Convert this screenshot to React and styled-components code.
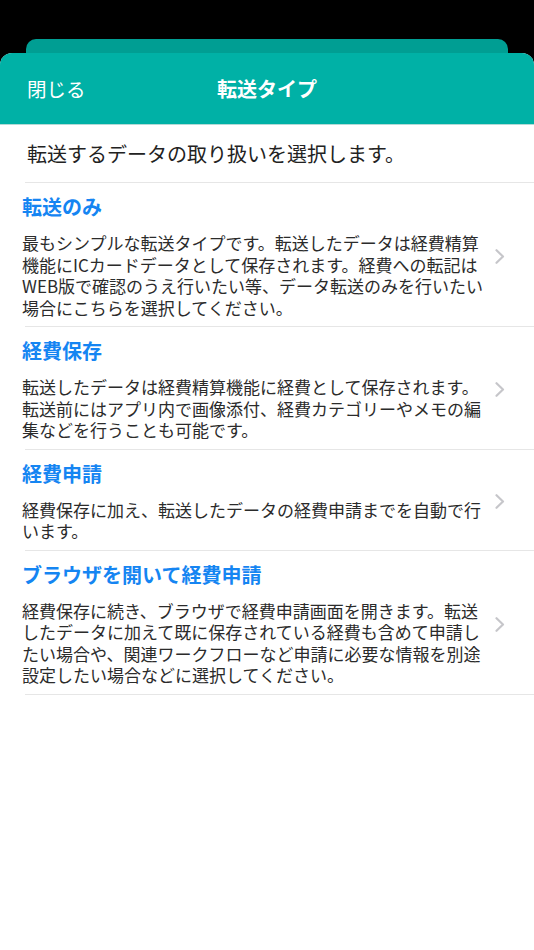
import React from "react";
import styled, { createGlobalStyle } from "styled-components";

const GlobalStyle = createGlobalStyle`
  html, body {
    margin: 0;
    padding: 0;
    background: #000;
  }
  body {
    font-family: "Noto Sans CJK JP", "Noto Sans", sans-serif;
    -webkit-font-smoothing: antialiased;
  }
`;

const Screen = styled.div`
  min-height: 950px;
  background: #000;
  padding-top: 39px;
  display: flex;
  flex-direction: column;
  box-sizing: border-box;
`;

const BackCard = styled.div`
  margin: 0 26px;
  height: 14px;
  background: #009e93;
  border-radius: 10px 10px 0 0;
`;

const Sheet = styled.div`
  flex: 1;
  background: #fff;
  border-radius: 12px 12px 0 0;
  overflow: hidden;
  display: flex;
  flex-direction: column;
`;

const Header = styled.header`
  height: 71px;
  background: #00b1a6;
  border-bottom: 1px solid #b3dad6;
  display: grid;
  grid-template-columns: 1fr auto 1fr;
  align-items: center;
  color: #fff;
`;

const CloseButton = styled.button`
  justify-self: start;
  background: none;
  border: none;
  padding: 0 0 0 27px;
  color: #fff;
  font-family: inherit;
  font-size: 19.5px;
  font-weight: 400;
  cursor: pointer;
`;

const Title = styled.h1`
  margin: 0;
  font-size: 20px;
  font-weight: 700;
  color: #fff;
`;

const Lead = styled.p`
  margin: 0;
  height: 57px;
  display: flex;
  align-items: center;
  padding-left: 27px;
  font-size: 20px;
  color: #222;
`;

const Divider = styled.div`
  height: 1px;
  margin-left: 25px;
  background: #e6e6e6;
`;

const Item = styled.div`
  display: flex;
  align-items: center;
  padding: 12px 0 8px 22px;
  cursor: pointer;
`;

const ItemText = styled.div`
  width: 470px;
  display: flex;
  flex-direction: column;
  gap: 13px;
`;

const ItemTitle = styled.div`
  font-size: 20px;
  line-height: 24px;
  font-weight: 700;
  color: #1585f2;
`;

const ItemDesc = styled.div`
  font-size: 17px;
  line-height: 21.5px;
  color: #2b2b2b;
`;

const Chevron = styled.svg`
  margin-left: 3px;
  flex: none;
`;

const items = [
  {
    title: "転送のみ",
    desc:
      "最もシンプルな転送タイプです。転送したデータは経費精算機能にICカードデータとして保存されます。経費への転記はWEB版で確認のうえ行いたい等、データ転送のみを行いたい場合にこちらを選択してください。",
  },
  {
    title: "経費保存",
    desc:
      "転送したデータは経費精算機能に経費として保存されます。転送前にはアプリ内で画像添付、経費カテゴリーやメモの編集などを行うことも可能です。",
  },
  {
    title: "経費申請",
    desc: "経費保存に加え、転送したデータの経費申請までを自動で行います。",
  },
  {
    title: "ブラウザを開いて経費申請",
    desc:
      "経費保存に続き、ブラウザで経費申請画面を開きます。転送したデータに加えて既に保存されている経費も含めて申請したい場合や、関連ワークフローなど申請に必要な情報を別途設定したい場合などに選択してください。",
  },
];

export default function App() {
  return (
    <>
      <GlobalStyle />
      <Screen>
        <BackCard />
        <Sheet>
          <Header>
            <CloseButton>閉じる</CloseButton>
            <Title>転送タイプ</Title>
            <span />
          </Header>
          <Lead>転送するデータの取り扱いを選択します。</Lead>
          <Divider />
          {items.map((it) => (
            <React.Fragment key={it.title}>
              <Item>
                <ItemText>
                  <ItemTitle>{it.title}</ItemTitle>
                  <ItemDesc>{it.desc}</ItemDesc>
                </ItemText>
                <Chevron width="10" height="15" viewBox="0 0 10 15">
                  <path
                    d="M1.5 1.2 L8 7.5 L1.5 13.8"
                    fill="none"
                    stroke="#c6c6ca"
                    strokeWidth="2.2"
                    strokeLinecap="round"
                    strokeLinejoin="round"
                  />
                </Chevron>
              </Item>
              <Divider />
            </React.Fragment>
          ))}
        </Sheet>
      </Screen>
    </>
  );
}
